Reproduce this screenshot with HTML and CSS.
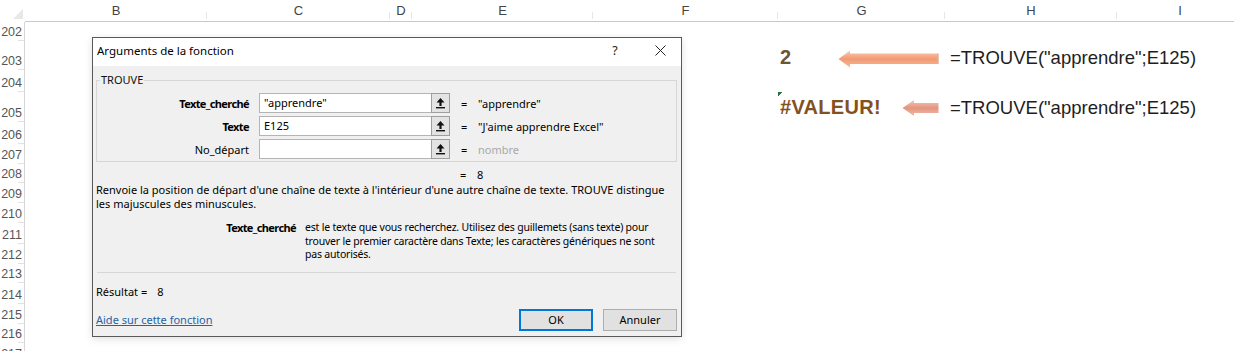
FILE: index.html
```html
<!DOCTYPE html>
<html lang="fr">
<head>
<meta charset="utf-8">
<title>TROUVE</title>
<link rel="stylesheet" href="styles.css">
</head>
<body>
<div class="sheet">
  <div class="corner">
    <svg class="corner-tri" width="10" height="10" viewBox="0 0 10 10"><path d="M10 0 L10 10 L0 10 Z" fill="#e8e8e8"/></svg>
  </div>
  <div class="colheads">
    <div class="ch w182">B</div>
    <div class="ch w183">C</div>
    <div class="ch w22">D</div>
    <div class="ch w181">E</div>
    <div class="ch w185">F</div>
    <div class="ch w167">G</div>
    <div class="ch w172">H</div>
    <div class="ch w126">I</div>
  </div>
  <div class="rowheads">
    <div class="rh h19">202</div>
    <div class="rh h29">203</div>
    <div class="rh h22">204</div>
    <div class="rh h30">205</div>
    <div class="rh h22">206</div>
    <div class="rh h20">207</div>
    <div class="rh h19">208</div>
    <div class="rh h20">209</div>
    <div class="rh h20">210</div>
    <div class="rh h21">211</div>
    <div class="rh h20">212</div>
    <div class="rh h19">213</div>
    <div class="rh h21">214</div>
    <div class="rh h20">215</div>
    <div class="rh h19">216</div>
    <div class="rh h20">217</div>
  </div>
  <div class="cells">
    <div class="cell g203 num">2</div>
    <div class="cell h203 formula">=TROUVE("apprendre";E125)</div>
    <div class="cell g205 err">#VALEUR!</div>
    <div class="cell h205 formula">=TROUVE("apprendre";E125)</div>
  </div>
</div>

<svg class="arrow arrow1" width="101" height="18" viewBox="0 0 101 18">
  <defs>
    <linearGradient id="ga" x1="0" y1="0" x2="0" y2="1">
      <stop offset="0" stop-color="#f9cdb6"/>
      <stop offset="0.5" stop-color="#f29a72"/>
      <stop offset="1" stop-color="#f6b89a"/>
    </linearGradient>
  </defs>
  <path d="M0.5 9 L12 0.5 L12 3.5 L100.5 3.5 L100.5 14 L12 14 L12 17.5 Z" fill="url(#ga)"/>
  <path d="M100 3.5 L100 14" stroke="#d9b4a2" stroke-width="1"/>
</svg>
<svg class="arrow arrow2" width="37" height="18" viewBox="0 0 37 18">
  <defs>
    <linearGradient id="gb" x1="0" y1="0" x2="0" y2="1">
      <stop offset="0" stop-color="#f2c8b8"/>
      <stop offset="0.5" stop-color="#e4957f"/>
      <stop offset="1" stop-color="#efbcab"/>
    </linearGradient>
  </defs>
  <path d="M0.5 9 L12 1 L12 4 L36.5 4 L36.5 14 L12 14 L12 17 Z" fill="url(#gb)"/>
</svg>

<div class="dialog">
  <div class="titlebar">
    <div class="title">Arguments de la fonction</div>
    <div class="tb-btn help">?</div>
    <div class="tb-btn close">
      <svg width="11" height="11" viewBox="0 0 11 11"><path d="M0.5 0.5 L10.5 10.5 M10.5 0.5 L0.5 10.5" stroke="#222" stroke-width="1"/></svg>
    </div>
  </div>
  <div class="dbody">
    <fieldset class="group">
      <legend>TROUVE</legend>
      <div class="arg">
        <div class="arg-label bold">Texte_cherché</div>
        <div class="field">
          <div class="field-input">"apprendre"</div>
          <div class="field-btn"><svg width="11" height="12" viewBox="0 0 11 12"><path d="M5.5 1 L9.5 5.5 L6.6 5.5 L6.6 9 L4.4 9 L4.4 5.5 L1.5 5.5 Z" fill="#111"/><rect x="1" y="10" width="9" height="1.4" fill="#111"/></svg></div>
        </div>
        <div class="eq">=</div>
        <div class="arg-val">"apprendre"</div>
      </div>
      <div class="arg">
        <div class="arg-label bold">Texte</div>
        <div class="field">
          <div class="field-input">E125</div>
          <div class="field-btn"><svg width="11" height="12" viewBox="0 0 11 12"><path d="M5.5 1 L9.5 5.5 L6.6 5.5 L6.6 9 L4.4 9 L4.4 5.5 L1.5 5.5 Z" fill="#111"/><rect x="1" y="10" width="9" height="1.4" fill="#111"/></svg></div>
        </div>
        <div class="eq">=</div>
        <div class="arg-val">"J'aime apprendre Excel"</div>
      </div>
      <div class="arg">
        <div class="arg-label">No_départ</div>
        <div class="field">
          <div class="field-input"></div>
          <div class="field-btn"><svg width="11" height="12" viewBox="0 0 11 12"><path d="M5.5 1 L9.5 5.5 L6.6 5.5 L6.6 9 L4.4 9 L4.4 5.5 L1.5 5.5 Z" fill="#111"/><rect x="1" y="10" width="9" height="1.4" fill="#111"/></svg></div>
        </div>
        <div class="eq">=</div>
        <div class="arg-val muted">nombre</div>
      </div>
    </fieldset>
    <div class="total"><span class="eq">=</span><span>8</span></div>
    <p class="desc">Renvoie la position de départ d'une chaîne de texte à l'intérieur d'une autre chaîne de texte. TROUVE distingue<br>les majuscules des minuscules.</p>
    <div class="arghelp">
      <div class="arghelp-label bold">Texte_cherché</div>
      <div class="arghelp-text">est le texte que vous recherchez. Utilisez des guillemets (sans texte) pour<br>trouver le premier caractère dans Texte; les caractères génériques ne sont<br>pas autorisés.</div>
    </div>
    <div class="sep"></div>
    <div class="result"><span>Résultat =</span><span class="result-val">8</span></div>
    <div class="footer">
      <a class="help-link" href="#">Aide sur cette fonction</a>
      <button class="btn btn-ok" type="button">OK</button>
      <button class="btn" type="button">Annuler</button>
    </div>
  </div>
</div>
</body>
</html>
```

FILE: styles.css
```css
* { box-sizing: border-box; }
html, body { margin: 0; padding: 0; }
body {
  width: 1234px;
  height: 351px;
  overflow: hidden;
  background: #ffffff;
  font-family: "Liberation Sans", Arial, sans-serif;
  position: relative;
}

/* ---------- spreadsheet ---------- */
.sheet {
  display: grid;
  grid-template-columns: 25px 1fr;
  grid-template-rows: 22px 1fr;
  height: 351px;
}
.corner {
  display: flex;
  align-items: flex-end;
  justify-content: flex-end;
  padding: 0 2px 3px 0;
}
.colheads {
  display: flex;
  border-bottom: 1px solid #c8c8c8;
  overflow: hidden;
}
.ch {
  flex: none;
  text-align: center;
  line-height: 21px;
  font-size: 13px;
  color: #444;
  background: linear-gradient(#e6e6e6, #e6e6e6) no-repeat right 0 bottom 2px / 1px 7px;
}
.w182 { width: 182px; }
.w183 { width: 183px; }
.w22 { width: 22px; }
.w181 { width: 181px; }
.w185 { width: 185px; }
.w167 { width: 167px; }
.w172 { width: 172px; }
.w126 { width: 126px; }

.rowheads {
  display: flex;
  flex-direction: column;
  border-right: 1px solid #d6d6d6;
  overflow: hidden;
}
.rh {
  flex: none;
  display: flex;
  align-items: flex-end;
  justify-content: flex-end;
  padding: 0 2px 1px 0;
  font-size: 12.5px;
  line-height: 16px;
  color: #555;
  background: linear-gradient(#e2e2e2, #e2e2e2) no-repeat right bottom / 6px 1px;
}
.h19 { height: 19px; }
.h20 { height: 20px; }
.h21 { height: 21px; }
.h22 { height: 22px; }
.h29 { height: 29px; }
.h30 { height: 30px; }

.cells {
  display: grid;
  grid-template-columns: 182px 183px 22px 181px 185px 167px 172px 126px;
  grid-template-rows: 19px 29px 22px 30px;
}
.cell {
  display: flex;
  align-items: flex-end;
  white-space: nowrap;
}
.g203 { grid-column: 6; grid-row: 2; padding: 0 0 1px 2px; }
.h203 { grid-column: 7; grid-row: 2; padding: 0 0 1px 5px; }
.g205 {
  grid-column: 6; grid-row: 4; padding: 0 0 3px 2px;
  background: linear-gradient(135deg, #217346 3.5px, transparent 3.5px) no-repeat 0 0 / 6px 6px;
}
.h205 { grid-column: 7; grid-row: 4; padding: 0 0 3px 5px; }
.num { font-weight: bold; font-size: 20px; line-height: 23px; color: #6b5634; }
.err { font-weight: bold; font-size: 20px; line-height: 23px; color: #83511f; letter-spacing: 0.3px; }
.formula { font-size: 18.5px; line-height: 23px; color: #1e1e1e; }

.arrow { position: absolute; }
.arrow1 { left: 838px; top: 50px; }
.arrow2 { left: 902px; top: 99px; }

/* ---------- dialog ---------- */
.dialog {
  position: absolute;
  left: 92px;
  top: 37px;
  width: 590px;
  height: 300px;
  border: 1px solid #595959;
  background: #f0f0f0;
  font-family: "Noto Sans", "Open Sans", sans-serif;
  font-size: 11px;
  color: #000;
  display: flex;
  flex-direction: column;
  box-shadow: 0 2px 8px rgba(0,0,0,0.12);
}
.titlebar {
  height: 28px;
  background: #fff;
  display: flex;
  align-items: center;
  flex: none;
  padding-bottom: 3px;
}
.title { flex: 1; padding-left: 4px; font-size: 11.5px; }
.tb-btn { display: flex; align-items: center; justify-content: center; height: 25px; }
.help { width: 30px; margin-right: 9px; font-size: 12.5px; color: #222; }
.close { width: 42px; }

.dbody {
  flex: 1;
  padding: 0 4px 4px 3px;
  display: flex;
  flex-direction: column;
}
.group {
  margin: 6px 0 0 0;
  padding: 5px 0 2px 3px;
  border: 1px solid #d6d6d6;
  min-width: 0;
  display: flex;
  flex-direction: column;
  gap: 3px;
}
.group legend {
  padding: 0 1px;
  line-height: 16px;
  color: #111;
}
.arg { display: flex; align-items: center; height: 20px; }
.arg-label { width: 149px; text-align: right; }
.bold { font-weight: bold; letter-spacing: -0.6px; }
.field {
  margin-left: 10px;
  width: 191px;
  height: 20px;
  display: flex;
  border: 1px solid #b4b4b4;
  background: #fff;
}
.field-input { flex: 1; padding-left: 4px; line-height: 18px; white-space: nowrap; }
.field-btn {
  width: 19px;
  background: #e3e3e3;
  border: 1px solid #9e9e9e;
  margin: -1px -1px -1px 0;
  display: flex;
  align-items: center;
  justify-content: center;
}
.eq { margin-left: 11px; width: 17px; }
.arg-val { white-space: nowrap; }
.muted { color: #a8a8a8; }

.total {
  margin-top: 6px;
  padding-left: 364px;
  line-height: 14px;
  display: flex;
}
.total .eq { margin-left: 0; }
.desc {
  margin: 1px 0 0 0;
  line-height: 14px;
  white-space: nowrap;
}
.arghelp {
  margin-top: 10px;
  display: flex;
  line-height: 13.5px;
}
.arghelp-label { width: 200px; text-align: right; flex: none; }
.arghelp-text { margin-left: 9px; white-space: nowrap; font-size: 10.5px; letter-spacing: -0.2px; }
.sep {
  margin: 10px 1px 0 1px;
  height: 1px;
  background: #d6d6d6;
}
.result {
  margin-top: 12px;
  line-height: 14px;
  display: flex;
}
.result-val { margin-left: 10px; }
.footer {
  margin-top: 10px;
  display: flex;
  align-items: center;
  gap: 10px;
}
.help-link {
  flex: 1;
  color: #2563a5;
  text-decoration: underline;
}
.btn {
  width: 74px;
  height: 22px;
  border: 1px solid #adadad;
  background: #e1e1e1;
  font-family: inherit;
  font-size: 11px;
  color: #000;
  padding: 0;
}
.btn-ok {
  border-color: #0078d7;
  box-shadow: inset 0 0 0 1px #0078d7;
}
```
